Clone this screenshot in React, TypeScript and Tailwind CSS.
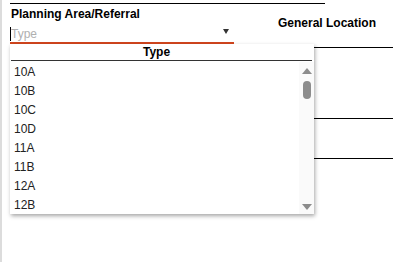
import React from 'react';

const items = ['10A', '10B', '10C', '10D', '11A', '11B', '12A', '12B'];

export default function App() {
    return (
        <div className="relative w-[393px] h-[262px] bg-white overflow-hidden font-['Liberation_Sans',Arial,sans-serif] text-black">
            {/* left edge strip */}
            <div className="absolute left-0 top-0 h-full w-[2px] bg-[#dcdcdc]" />

            <div className="flex pt-[3px]">
                {/* Planning Area field */}
                <div className="ml-[10px] w-[224px]">
                    <div className="border-t border-black w-[315px]" />
                    <div className="pt-[3px] text-[12px] font-bold leading-[15px] ml-[1px]">Planning Area/Referral</div>
                    <div className="relative mt-[4px] h-[18px] flex items-center border-b-2 border-[#d2461e]">
                        <span className="h-[14px] w-px bg-black" />
                        <span className="text-[12px] text-[#b0b0b0] leading-[14px]">Type</span>
                        <span className="absolute right-[5px] top-[3px] w-0 h-0 border-l-[3px] border-r-[3px] border-t-[5px] border-l-transparent border-r-transparent border-t-[#333]" />
                    </div>
                </div>

                {/* General Location column */}
                <div className="flex-1 ml-[10px] mt-[11px] flex flex-col">
                    <div className="pl-[34px] pt-[2px] h-[33px] text-[12px] font-bold leading-[15px]">General Location</div>
                    <div className="border-t border-black" />
                    <div className="h-[70px]" />
                    <div className="border-t border-black" />
                    <div className="h-[39px]" />
                    <div className="border-t border-black" />
                </div>
            </div>

            {/* Dropdown menu */}
            <div className="absolute left-[10px] top-[44px] w-[304px] h-[170px] bg-white shadow-[1px_2px_4px_rgba(0,0,0,0.35)] flex flex-col">
                <div className="h-[17px] mx-[1px] mr-[2px] border-b border-[#333] flex items-center justify-center text-[12px] font-bold leading-[14px] box-content pr-[10px] pt-[1px]">
                    Type
                </div>
                <div className="flex flex-1">
                    <div className="flex-1 pl-[4px] pt-[2px]">
                        {items.map((it) => (
                            <div key={it} className="h-[18.9px] flex items-center text-[12px] leading-[14px] text-[#222]">
                                {it}
                            </div>
                        ))}
                    </div>
                    <div className="w-[15px] mt-[1px] bg-[#fafafa] flex flex-col items-center pt-[6px] pb-[4px]">
                        <span className="w-0 h-0 border-l-[5px] border-r-[5px] border-b-[6px] border-l-transparent border-r-transparent border-b-[#8c8c8c]" />
                        <span className="mt-[7px] w-[8px] h-[18px] rounded-full bg-[#8c8c8c]" />
                        <span className="flex-1" />
                        <span className="w-0 h-0 border-l-[5px] border-r-[5px] border-t-[6px] border-l-transparent border-r-transparent border-t-[#8c8c8c]" />
                    </div>
                </div>
            </div>
        </div>
    );
}
